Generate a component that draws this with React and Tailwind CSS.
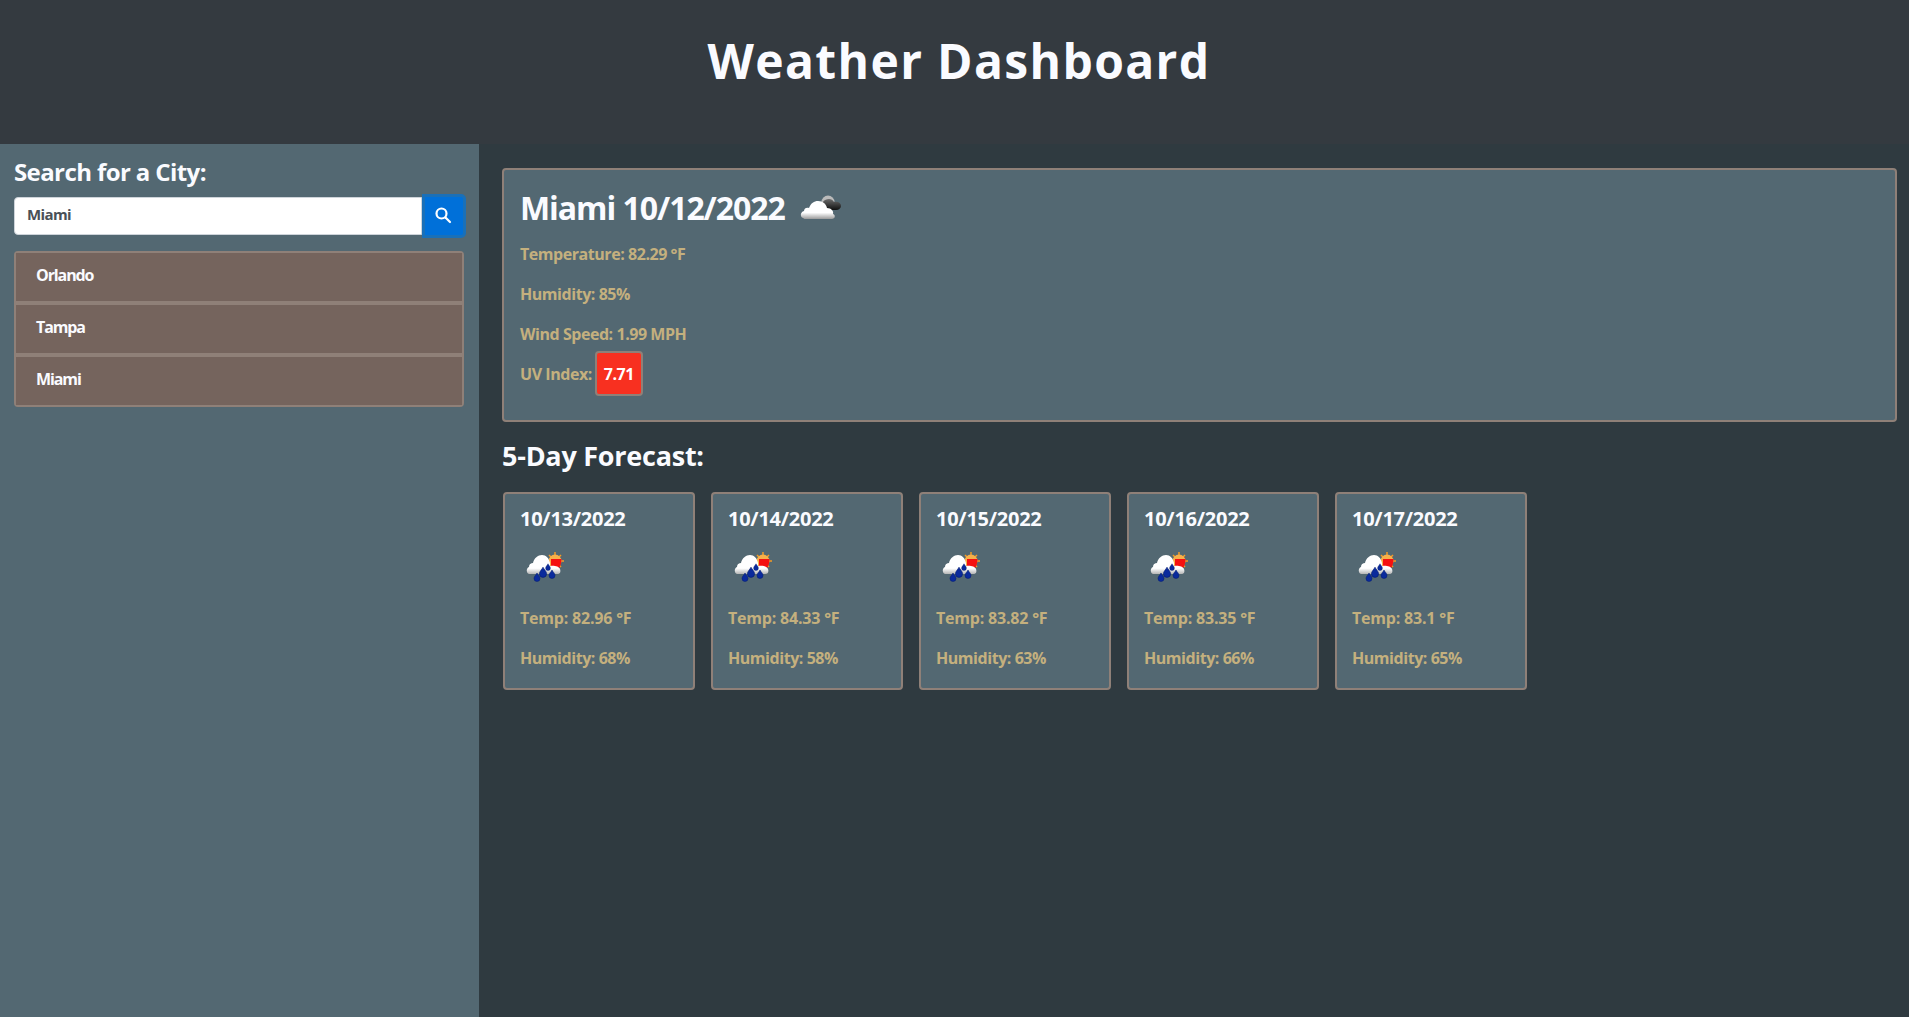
const font = { fontFamily: '"Open Sans", "Liberation Sans", sans-serif' };

function PartlyCloudy() {
  return (
    <svg width="44" height="30" viewBox="0 0 44 30">
      <defs>
        <linearGradient id="w" x1="0" y1="0" x2="0" y2="1"><stop offset="0.65" stopColor="#ffffff" /><stop offset="1" stopColor="#9a9a9a" /></linearGradient>
        <linearGradient id="d" x1="0" y1="0" x2="0" y2="1"><stop offset="0" stopColor="#6b6b6b" /><stop offset="1" stopColor="#101010" /></linearGradient>
      </defs>
      <circle cx="28" cy="9" r="6.500" fill="#bbb" />
      <path d="M21 15c0-5 3-9 8-9 2 0 4 1 5 3 4-1 7 1 7 4 0 2-2 4-5 4H24z" fill="url(#d)" />
      <path d="M3 25c-3-1-3-6 1-7 0-3 3-4 5-3 2-5 5-7 9-7 5 0 8 3 9 7 4 0 7 3 6 6 3 1 2 5-1 5H6c-1 0-2 0-3-1z" fill="url(#w)" />
    </svg>
  );
}

function Drop({ x, y, s = 1 }) {
  return <path transform={`translate(${x} ${y}) scale(${s})`} d="M0-4C1-2 3-.5 3 1.500a3 3 0 0 1-6 0C-3-.5-1-2 0-4z" fill="#0a2a9c" stroke="#001a70" strokeWidth="0.5" />;
}

function RainSun() {
  return (
    <svg width="44" height="34" viewBox="0 0 44 34">
      <defs><linearGradient id="cw" x1="0" y1="0" x2="0" y2="1"><stop offset="0.7" stopColor="#fff" /><stop offset="1" stopColor="#b5b5b5" /></linearGradient></defs>
      <g stroke="#f59a23" strokeWidth="1.500">
        <path d="M30 2v18M21 11h18M24 5l12 12M36 5L24 17" />
      </g>
      <circle cx="30" cy="11" r="6.500" fill="#f7b04a" />
      <path d="M26 9h10.500c0 4-1 7-2.500 9h-8z" fill="#f51010" />
      <path d="M4 24c-3-1-3-6 0-7 0-3 2-4 4-4 1-5 5-8 9-8 4 0 7 3 8 8 0 1 0 2 0 3 3-1 9 0 10 3 1 3 0 5-3 5H6z" fill="url(#cw)" />
      <Drop x={23} y={17} s={0.8} />
      <Drop x={18} y={22} s={1.200} />
      <Drop x={12} y={27} />
      <Drop x={27} y={24} />
    </svg>
  );
}

const forecast = [
  ["10/13/2022", "82.96", "68"],
  ["10/14/2022", "84.33", "58"],
  ["10/15/2022", "83.82", "63"],
  ["10/16/2022", "83.35", "66"],
  ["10/17/2022", "83.1", "65"],
];

export default function App() {
  return (
    <div className="min-h-[1017px] flex flex-col bg-[#2f3a40] text-[#fafbff]" style={font}>
      <header className="h-[144px] bg-[#343a40] flex justify-center pt-[32px] pl-[9px]">
        <h1 className="text-[48px] leading-[58px] font-bold tracking-[1.35px]">Weather Dashboard</h1>
      </header>
      <div className="flex flex-1">
        <aside className="w-[479px] shrink-0 bg-[#536872] px-[14px] pt-[13px]">
          <h2 className="text-[24px] leading-[30px] font-bold tracking-[-0.6px]">Search for a City:</h2>
          <div className="flex mt-[10px] h-[38px]">
            <div className="flex-1 bg-white rounded-l-[4px] border border-[#ced4da] pl-[12px] pb-[4px] flex items-center text-[15px] font-bold text-[#495057] tracking-[-0.6px]">Miami</div>
            <div className="w-[44px] h-[44px] -mt-[3px] -mr-[1px] pb-[2px] pr-[2px] bg-[#0070d9] border-[3px] border-[#1a70b8] rounded-r-[5px] flex items-center justify-center">
              <svg width="18" height="18" viewBox="0 0 18 18" fill="none" stroke="white" strokeWidth="2.200" strokeLinecap="round"><circle cx="7.500" cy="7.500" r="5" /><path d="M11.500 11.500L16 16" /></svg>
            </div>
          </div>
          <ul className="mt-[16px] w-[450px] border-2 border-[#8f8078] rounded-[4px] flex flex-col gap-[4px] bg-[#8f8078]">
            {["Orlando", "Tampa", "Miami"].map((c) => (
              <li key={c} className="h-[48px] pl-[20px] pb-[4px] bg-[#75645d] flex items-center text-[16px] font-bold tracking-[-1.1px]">{c}</li>
            ))}
          </ul>
        </aside>
        <main className="flex-1 pl-[23px] pr-[12px] pt-[24px]">
          <section className="h-[254px] bg-[#536872] border-2 border-[#8f8078] rounded-[4px] px-[16px] pt-[19px]">
            <h2 className="flex items-center text-[32px] leading-[38px] font-bold tracking-[-1.05px]">
              Miami 10/12/2022
              <span className="ml-[15px] flex"><PartlyCloudy /></span>
            </h2>
            <div className="text-[16px] leading-[24px] font-bold text-[#c4b07e] tracking-[-0.45px] mt-[15px] flex flex-col">
              <p className="mb-[16px]">Temperature: 82.29 °F</p>
              <p className="mb-[16px]">Humidity: 85%</p>
              <p className="mb-[5px]">Wind Speed: 1.99 MPH</p>
              <p className="flex items-center">
                UV Index:
                <span className="ml-[3px] w-[48px] h-[45px] bg-[#f83020] border-2 border-[#8f8078] rounded-[4px] text-white flex items-center justify-center">7.71</span>
              </p>
            </div>
          </section>
          <h3 className="mt-[17px] text-[27px] leading-[33px] font-bold tracking-[-0.25px]">5-Day Forecast:</h3>
          <div className="flex gap-[16px] mt-[20px] ml-[1px]">
            {forecast.map(([d, t, h]) => (
              <article key={d} className="w-[192px] h-[198px] bg-[#536872] border-2 border-[#8f8078] rounded-[4px] pl-[15px] pr-[16px] pt-[12px]">
                <h4 className="text-[20px] leading-[26px] font-bold tracking-[-0.25px]">{d}</h4>
                <div className="mt-[18px] h-[34px] pl-[5px] flex items-center"><RainSun /></div>
                <div className="mt-[22px] text-[16px] leading-[24px] font-bold text-[#c4b07e] tracking-[-0.2px]">
                  <p className="mb-[16px]">Temp: {t} °F</p>
                  <p className="tracking-[-0.45px]">Humidity: {h}%</p>
                </div>
              </article>
            ))}
          </div>
        </main>
      </div>
    </div>
  );
}
